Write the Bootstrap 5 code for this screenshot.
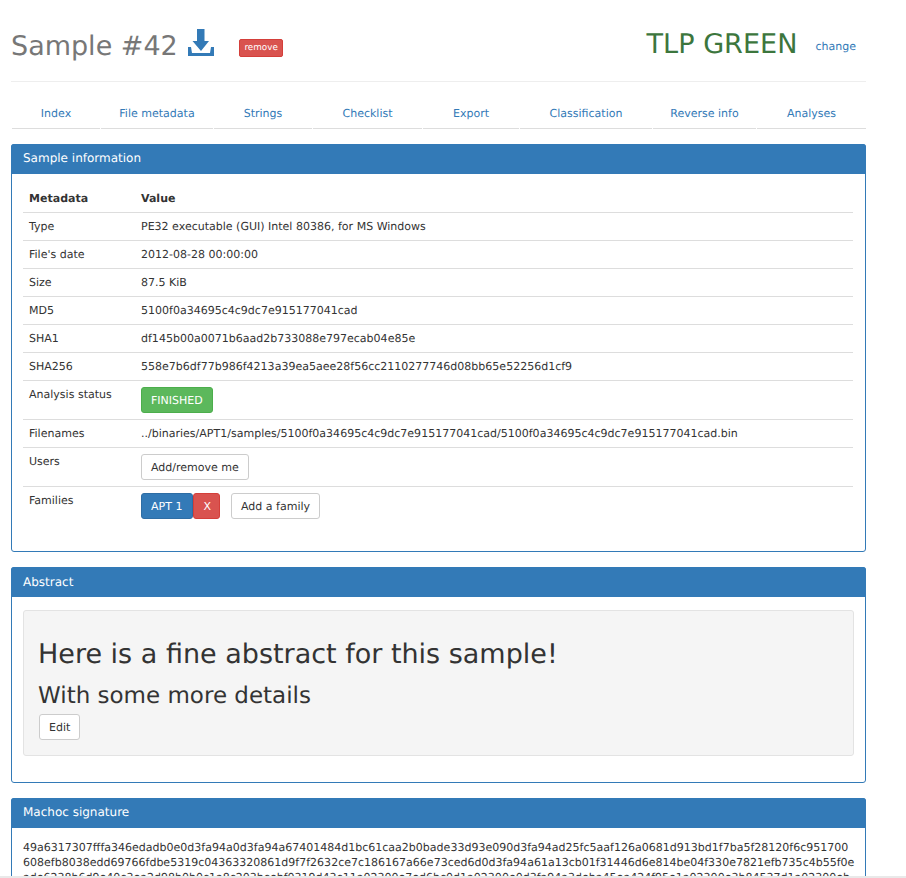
<!DOCTYPE html>
<html lang="en">
<head>
<meta charset="UTF-8"/>
<title>Sample #42</title>
<link href="https://cdn.jsdelivr.net/npm/bootstrap@5.3.3/dist/css/bootstrap.min.css" rel="stylesheet"/>
<style>
html,body{height:878px;overflow:hidden}
body{font-family:"DejaVu Sans",sans-serif;font-size:11.02px;line-height:1.42857;color:#333;background:#fff;text-rendering:geometricPrecision}
a{text-decoration:none;color:#337ab7}
.page-wrap{width:877px;padding:0 11px}
.head-row{height:82px;border-bottom:1px solid #eee;display:flex;align-items:flex-start}
.sample-title{font-size:27px;color:#777;font-weight:400;margin:0;line-height:38px;padding-top:28px;margin-bottom:0}
.dl-icon{margin-left:2px;vertical-align:-1px}
.rm-label{background:#d9534f;color:#fff;font-size:8.8px;border-radius:2px;border:1px solid #d43f3a;padding:1px 4px;line-height:14px;margin-left:25px;margin-top:39px}
.tlp-name{font-size:27.1px;color:#3c763d;line-height:38px;padding-top:26px}
.tlp-change{margin-left:18px;margin-top:39px;margin-right:10px;color:#337ab7}
.tab-row{display:flex;margin-top:15px;margin-left:1px;gap:1px;margin-bottom:15px}
.tab-row a{display:block;height:32px;line-height:33px;text-align:center;border-bottom:1px solid #ddd}
.info-panel{border:1px solid #337ab7;border-radius:3px;margin-bottom:15px}
.info-head{background:#337ab7;color:#fff;font-size:12px;height:29px;line-height:27px;padding:1px 12px 0;margin:-1px -1px 0;border-radius:3px 3px 0 0;box-sizing:content-box}
.head-low{height:28px;padding-top:2px}
.info-body{padding:11px 12px 11px 11px}
.abstract-body{padding-top:13px;padding-right:11px}
.sig-body{padding-top:12px;padding-right:5px}
.meta-table{width:100%;margin-bottom:15px}
.meta-table th,.meta-table td{padding:6px 6px 5px;vertical-align:top;line-height:16px;border-top:1px solid #ddd;border-bottom:0;color:#333;font-size:11.02px}
.meta-table thead th{border-top:0;border-bottom:1px solid #ddd}
.meta-table tbody tr:first-child td{border-top:0}
.key-col{width:112px}
.bs-btn{display:inline-block;font-size:11.02px;line-height:16px;padding:5px 9px 3px;border-radius:3px;border:1px solid #ccc;background:#fff;color:#333;vertical-align:top;margin-bottom:1px}
.bs-green{background:#5cb85c;border-color:#4cae4c;color:#fff}
.bs-blue{background:#337ab7;border-color:#2e6da4;color:#fff;padding-right:10px}
.bs-red{background:#d9534f;border-color:#d43f3a;color:#fff;padding-right:8px}
.family-gap{margin-left:11px}
.abstract-well{background:#f5f5f5;border:1px solid #e3e3e3;border-radius:3px;padding:15px;margin-bottom:15px}
.abstract-well h1{font-size:27px;font-weight:400;line-height:32px;color:#333;margin:13px 0 12px -1px}
.abstract-well h2{font-size:23px;font-weight:400;line-height:26px;color:#333;margin:0 0 5px -1px}
.abstract-well .bs-btn{margin-bottom:0}
.sig-text{line-height:15px;margin:0;white-space:nowrap}
.bottom-edge{position:fixed;left:0;right:0;bottom:0;height:2px;background:#e9e9e9}
</style>
</head>
<body>
<div class="page-wrap">
  <div class="head-row">
    <h3 class="sample-title">Sample #42
      <svg class="dl-icon" width="26" height="27" viewBox="0 0 26 27"><path fill="#337ab7" d="M9 0h7.500v12H21L13 22 4.500 12H9zM0 18h3l1 6h18l1-6h3v9H0z"/></svg>
    </h3>
    <a href="#" class="rm-label">remove</a>
    <div class="tlp-name ms-auto">TLP GREEN</div>
    <a href="#" class="tlp-change">change</a>
  </div>
  <div class="tab-row">
    <a href="#" style="width:88px">Index</a>
    <a href="#" style="width:112px">File metadata</a>
    <a href="#" style="width:98px">Strings</a>
    <a href="#" style="width:109px">Checklist</a>
    <a href="#" style="width:96px">Export</a>
    <a href="#" style="width:132px">Classification</a>
    <a href="#" style="width:103px">Reverse info</a>
    <a href="#" style="width:109px">Analyses</a>
  </div>

  <div class="info-panel">
    <div class="info-head">Sample information</div>
    <div class="info-body">
      <table class="meta-table">
        <thead><tr><th class="key-col">Metadata</th><th>Value</th></tr></thead>
        <tbody>
          <tr><td>Type</td><td>PE32 executable (GUI) Intel 80386, for MS Windows</td></tr>
          <tr><td>File's date</td><td>2012-08-28 00:00:00</td></tr>
          <tr><td>Size</td><td>87.5 KiB</td></tr>
          <tr><td>MD5</td><td>5100f0a34695c4c9dc7e915177041cad</td></tr>
          <tr><td>SHA1</td><td>df145b00a0071b6aad2b733088e797ecab04e85e</td></tr>
          <tr><td>SHA256</td><td>558e7b6df77b986f4213a39ea5aee28f56cc2110277746d08bb65e52256d1cf9</td></tr>
          <tr><td>Analysis status</td><td><span class="bs-btn bs-green">FINISHED</span></td></tr>
          <tr><td>Filenames</td><td>../binaries/APT1/samples/5100f0a34695c4c9dc7e915177041cad/5100f0a34695c4c9dc7e915177041cad.bin</td></tr>
          <tr><td>Users</td><td><a href="#" class="bs-btn">Add/remove me</a></td></tr>
          <tr><td>Families</td><td><a href="#" class="bs-btn bs-blue">APT 1</a><a href="#" class="bs-btn bs-red">X</a><a href="#" class="bs-btn family-gap">Add a family</a></td></tr>
        </tbody>
      </table>
    </div>
  </div>

  <div class="info-panel">
    <div class="info-head head-low">Abstract</div>
    <div class="info-body abstract-body">
      <div class="abstract-well">
        <h1>Here is a fine abstract for this sample!</h1>
        <h2>With some more details</h2>
        <a href="#" class="bs-btn">Edit</a>
      </div>
    </div>
  </div>

  <div class="info-panel">
    <div class="info-head">Machoc signature</div>
    <div class="info-body sig-body">
      <p class="sig-text">49a6317307fffa346edadb0e0d3fa94a0d3fa94a67401484d1bc61caa2b0bade33d93e090d3fa94ad25fc5aaf126a0681d913bd1f7ba5f28120f6c951700<br>608efb8038edd69766fdbe5319c04363320861d9f7f2632ce7c186167a66e73ced6d0d3fa94a61a13cb01f31446d6e814be04f330e7821efb735c4b55f0e<br>ade6238b6d9e40c3ea2d98b0b0c1a8c203bcebf0319d43c11a02300e7ed6bc0d1a02300e0d3fa94a3deba45ea424f95e1a02300e3b84537d1a02300eb</p>
    </div>
  </div>
</div>
<div class="bottom-edge"></div>
</body>
</html>
